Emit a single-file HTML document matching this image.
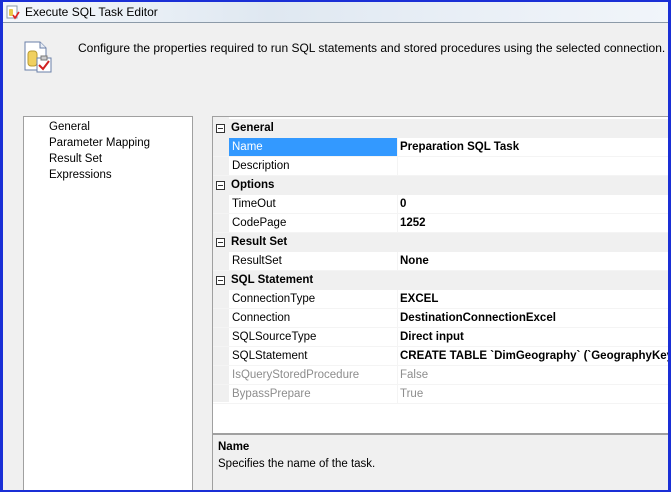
<!DOCTYPE html>
<html><head><meta charset="utf-8"><style>
*{margin:0;padding:0;box-sizing:border-box}
body{width:671px;height:492px;overflow:hidden;background:#1a2fd6;font-family:"Liberation Sans",sans-serif;font-size:11.5px;color:#000;position:relative}
#win{position:absolute;left:3px;top:2px;right:3px;bottom:2px;background:#f0f0f0;overflow:hidden}
#title{position:absolute;left:0;top:0;right:0;height:21px;background:linear-gradient(90deg,#f4f7fb,#dfe8f1 40%,#e9eff6 70%,#f1f5fa);border-bottom:1px solid #8c9aa8}
#title span{position:absolute;left:22px;top:3px;font-size:12px;color:#000}
.t{position:absolute;white-space:nowrap}
#list{position:absolute;left:20px;top:114px;width:170px;height:380px;background:#fff;border:1px solid #a0a0a0}
#grid{position:absolute;left:209px;top:114px;width:456px;height:318px;background:#fff;border:1px solid #a0a0a0;border-right:none;overflow:hidden}
#gut{position:absolute;left:0;top:0;width:16px;height:285px;background:#f0f0f0}
.row{position:absolute;left:0;width:456px;height:19px;white-space:nowrap;overflow:hidden}
.cat{background:#f0f0f0;font-weight:bold}
.cat .mb{position:absolute;left:3px;top:5px;width:9px;height:9px;border:1px solid #333;background:#fff}
.cat .mb:after{content:"";position:absolute;left:1px;top:3px;width:5px;height:1px;background:#333}
.cat .l{position:absolute;left:18px;top:3px}
.p .l{position:absolute;left:19px;top:3px}
.p .v{position:absolute;left:187px;top:3px;font-weight:bold;white-space:nowrap}
.p{border-bottom:1px solid #f4f4f4}
.p .sep{position:absolute;left:184px;top:0;width:1px;height:19px;background:#f4f4f4}
.dis{color:#8d8d8d}.dis .v{font-weight:normal}
#desc{position:absolute;left:209px;top:432px;width:456px;height:62px;border:1px solid #a0a0a0;border-right:none;background:#f0f0f0}
</style></head><body>
<div id="win">
<div id="title">
<svg style="position:absolute;left:3px;top:3px" width="15" height="15" viewBox="0 0 15 15"><rect x="1" y="1" width="10" height="12" fill="#fff" stroke="#8899aa"/><rect x="3" y="4" width="4" height="7" rx="1" fill="#e8c84a"/><path d="M7 10l2 3 4-6" stroke="#d22" stroke-width="1.6" fill="none"/></svg>
<span>Execute SQL Task Editor</span></div>
<svg style="position:absolute;left:20px;top:38px" width="34" height="34" viewBox="0 0 34 34">
<path d="M2 2h15l6 6v22H2z" fill="#fff" stroke="#6a7fa8"/>
<path d="M17 2v6h6" fill="#e8edf5" stroke="#6a7fa8"/>
<rect x="5" y="11" width="9" height="15" rx="3" fill="#f0d060" stroke="#b89a30"/>
<rect x="14" y="18" width="14" height="14" fill="#fff" stroke="#6a7fa8"/>
<rect x="18" y="16" width="6" height="4" fill="#ccc" stroke="#777"/>
<path d="M16 25l4 4 6-8" stroke="#d02020" stroke-width="2" fill="none"/>
</svg>
<div class="t" style="left:75px;top:39px;font-size:12px">Configure the properties required to run SQL statements and stored procedures using the selected connection.</div>
<div id="list">
<div class="t" style="left:25px;top:4px">General</div>
<div class="t" style="left:25px;top:20px">Parameter Mapping</div>
<div class="t" style="left:25px;top:36px">Result Set</div>
<div class="t" style="left:25px;top:52px">Expressions</div>
</div>
<div id="grid">
<div id="gut"></div>
<div class="row cat" style="top:2px"><div class="mb"></div><div class="l">General</div></div>
<div class="row p" style="top:21px"><div style="position:absolute;left:16px;top:0;width:168px;height:19px;background:#3399ff"></div><div class="l" style="color:#fff">Name</div><div class="sep"></div><div class="v">Preparation SQL Task</div></div>
<div class="row p" style="top:40px"><div class="l">Description</div><div class="sep"></div></div>
<div class="row cat" style="top:59px"><div class="mb"></div><div class="l">Options</div></div>
<div class="row p" style="top:78px"><div class="l">TimeOut</div><div class="sep"></div><div class="v">0</div></div>
<div class="row p" style="top:97px"><div class="l">CodePage</div><div class="sep"></div><div class="v">1252</div></div>
<div class="row cat" style="top:116px"><div class="mb"></div><div class="l">Result Set</div></div>
<div class="row p" style="top:135px"><div class="l">ResultSet</div><div class="sep"></div><div class="v">None</div></div>
<div class="row cat" style="top:154px"><div class="mb"></div><div class="l">SQL Statement</div></div>
<div class="row p" style="top:173px"><div class="l">ConnectionType</div><div class="sep"></div><div class="v">EXCEL</div></div>
<div class="row p" style="top:192px"><div class="l">Connection</div><div class="sep"></div><div class="v">DestinationConnectionExcel</div></div>
<div class="row p" style="top:211px"><div class="l">SQLSourceType</div><div class="sep"></div><div class="v">Direct input</div></div>
<div class="row p" style="top:230px"><div class="l">SQLStatement</div><div class="sep"></div><div class="v">CREATE TABLE `DimGeography` (`GeographyKey</div></div>
<div class="row p dis" style="top:249px"><div class="l">IsQueryStoredProcedure</div><div class="sep"></div><div class="v">False</div></div>
<div class="row p dis" style="top:268px"><div class="l">BypassPrepare</div><div class="sep"></div><div class="v">True</div></div>
</div>
<div id="desc">
<div class="t" style="left:5px;top:6px;font-weight:bold">Name</div>
<div class="t" style="left:5px;top:23px">Specifies the name of the task.</div>
</div>
</div>
</body></html>
